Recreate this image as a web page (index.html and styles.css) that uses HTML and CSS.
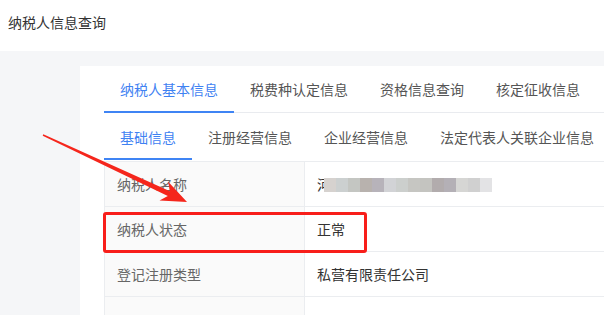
FILE: index.html
```html
<!DOCTYPE html>
<html lang="zh-CN">
<head>
    <meta charset="UTF-8">
    <meta name="viewport" content="width=device-width, initial-scale=1.0">
    <title>纳税人信息查询</title>
    <link rel="stylesheet" href="styles.css">
</head>
<body>
    <div class="topbar">纳税人信息查询</div>

    <div class="main">
        <div class="card">
            <div class="tabs tabs-main">
                <div class="tab active">纳税人基本信息</div>
                <div class="tab">税费种认定信息</div>
                <div class="tab">资格信息查询</div>
                <div class="tab">核定征收信息</div>
            </div>
            <div class="tabs tabs-sub">
                <div class="tab active">基础信息</div>
                <div class="tab">注册经营信息</div>
                <div class="tab">企业经营信息</div>
                <div class="tab">法定代表人关联企业信息</div>
            </div>
            <table class="info">
                <tr>
                    <td class="label">纳税人名称</td>
                    <td class="value">河<span class="blur">
                        <i style="background:#d6d2cf"></i><i style="background:#ccd0d0"></i><i style="background:#c4c6c2"></i><i style="background:#b8b2ae"></i><i style="background:#b7b3ba"></i><i style="background:#d2d3d6"></i><i style="background:#cccfcd"></i><i style="background:#c6c6c2"></i><i style="background:#c4c4c0"></i><i style="background:#b2acad"></i><i style="background:#b4b0b6"></i><i style="background:#d6d6d4"></i><i style="background:#d0d0d0"></i><i style="background:#e3e3e5"></i>
                    </span></td>
                </tr>
                <tr>
                    <td class="label">纳税人状态</td>
                    <td class="value">正常</td>
                </tr>
                <tr>
                    <td class="label">登记注册类型</td>
                    <td class="value">私营有限责任公司</td>
                </tr>
                <tr>
                    <td class="label"></td>
                    <td class="value"></td>
                </tr>
            </table>
        </div>
    </div>

    <!-- annotation marks drawn over the screenshot -->
    <div class="mark-box"></div>
    <svg class="mark-arrow" width="604" height="315" viewBox="0 0 604 315">
        <polygon points="43.3,134.3 170,191.3 168,181.5 187,202 159.5,200.5 167.8,195.9 42.7,135.7" fill="#f5261c"/>
    </svg>
</body>
</html>
```

FILE: styles.css
```css
body {
    margin: 0;
    padding: 0;
    font-family: "Noto Sans CJK SC", "Liberation Sans", sans-serif;
    font-size: 14px;
    color: #333;
    background-color: #f5f6f8;
    overflow: hidden;
    position: relative;
    height: 315px;
}
.topbar {
    height: 51px;
    box-sizing: border-box;
    padding: 12px 8px 0;
    line-height: 20px;
    background-color: #fff;
    color: #333;
}
.main {
    padding: 15px 0 0 80px;
}
.card {
    height: 249px;
    padding-left: 24px;
    background-color: #fff;
    overflow: hidden;
}
.tabs {
    display: flex;
}
.tabs-main {
    border-bottom: 1px solid #e9ebef;
}
.tab {
    position: relative;
    padding: 0 16px;
    height: 46px;
    line-height: 46px;
    color: #555;
    white-space: nowrap;
}
.tabs-sub .tab {
    height: 48px;
    line-height: 48px;
}
.tabs-sub .tab:last-child {
    padding-right: 0;
}
.tab.active {
    color: #3f82f2;
}
.tab.active::after {
    content: "";
    position: absolute;
    left: 0;
    right: 0;
    bottom: -1px;
    height: 2px;
    background-color: #3f84f4;
}
.tabs-sub .tab.active::after {
    bottom: 1px;
}
.info {
    border-collapse: collapse;
    width: 100%;
}
.info td {
    height: 45px;
    padding: 0 12px;
    border: 1px solid #ebedf0;
    border-right: none;
    box-sizing: border-box;
}
.info .label {
    width: 200px;
    background-color: #fafafa;
    color: #666;
}
.info .value {
    color: #333;
}
.blur {
    display: inline-flex;
    vertical-align: middle;
    margin-left: -7px;
    height: 14px;
    position: relative;
    top: -1px;
}
.blur i {
    width: 12px;
    height: 14px;
}
.mark-box {
    position: absolute;
    left: 103px;
    top: 212px;
    width: 264px;
    height: 41px;
    box-sizing: border-box;
    border: 3px solid #f81e1a;
    border-radius: 3px;
}
.mark-arrow {
    position: absolute;
    left: 0;
    top: 0;
    pointer-events: none;
}
```
